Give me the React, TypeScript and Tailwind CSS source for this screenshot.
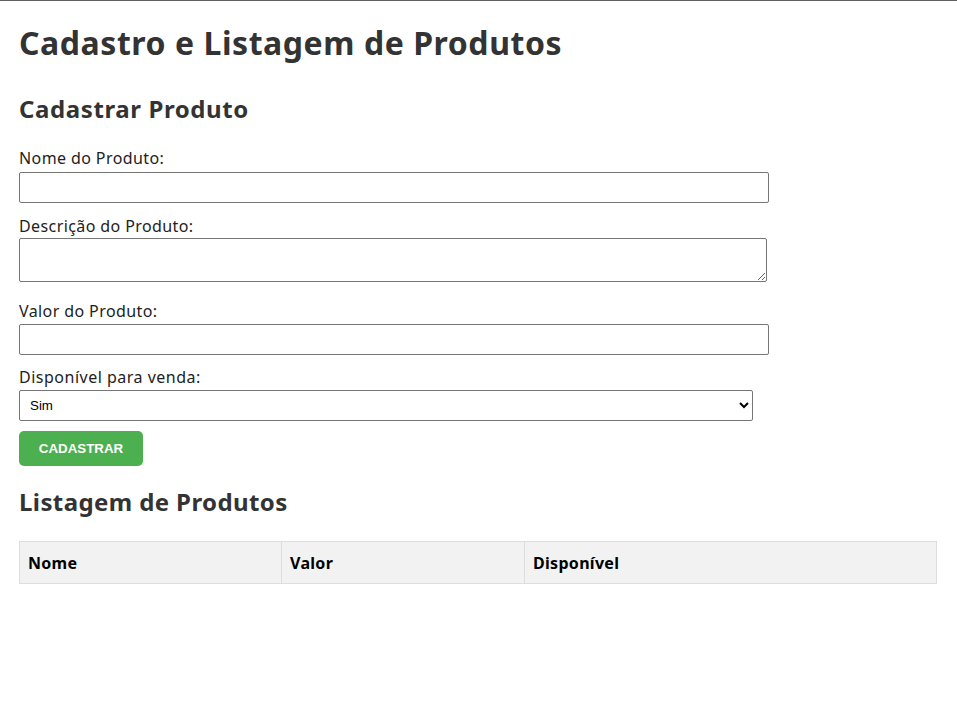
import React, { useState } from 'react';

type Produto = {
  nome: string;
  valor: string;
  disponivel: string;
};

export default function App() {
  const [nome, setNome] = useState('');
  const [descricao, setDescricao] = useState('');
  const [valor, setValor] = useState('');
  const [disponivel, setDisponivel] = useState('sim');
  const [produtos, setProdutos] = useState<Produto[]>([]);

  const cadastrar = (e: React.FormEvent) => {
    e.preventDefault();
    setProdutos([...produtos, { nome, valor, disponivel: disponivel === 'sim' ? 'Sim' : 'Não' }]);
    setNome('');
    setDescricao('');
    setValor('');
  };

  return (
    <div className="min-h-[702px] bg-white border-t border-[#5f5f5f] px-[19px] pt-[23px] font-['Noto_Sans',sans-serif]">
      <h1 className="text-[32px] leading-[38px] font-bold tracking-[0.55px] text-[#333]">Cadastro e Listagem de Produtos</h1>

      <h2 className="mt-[32px] text-[24px] leading-[30px] font-bold tracking-[0.6px] text-[#333]">Cadastrar Produto</h2>

      <form onSubmit={cadastrar}>
        <label className="block mt-[24px] text-[16px] leading-[20px] tracking-[0.4px] text-[#222]">Nome do Produto:</label>
        <input
          value={nome}
          onChange={(e) => setNome(e.target.value)}
          className="block mt-[4px] w-[750px] h-[31px] border border-[#767676] rounded-[2px] px-[7px]"
        />

        <label className="block mt-[13px] text-[16px] leading-[20px] tracking-[0.4px] text-[#222]">Descrição do Produto:</label>
        <textarea
          value={descricao}
          onChange={(e) => setDescricao(e.target.value)}
          className="block mt-[2px] w-[748px] h-[44px] border border-[#767676] rounded-[2px] px-[7px]"
        />

        <label className="block mt-[19px] text-[16px] leading-[20px] tracking-[0.4px] text-[#222]">Valor do Produto:</label>
        <input
          value={valor}
          onChange={(e) => setValor(e.target.value)}
          className="block mt-[3px] w-[750px] h-[31px] border border-[#767676] rounded-[2px] px-[7px]"
        />

        <label className="block mt-[12px] text-[16px] leading-[20px] tracking-[0.5px] text-[#222]">Disponível para venda:</label>
        <select
          value={disponivel}
          onChange={(e) => setDisponivel(e.target.value)}
          className="block mt-[3px] w-[734px] h-[31px] border border-[#767676] rounded-[2px] pl-[6px] text-[13.33px] font-['Liberation_Sans',Arial,sans-serif] text-black"
        >
          <option value="sim">Sim</option>
          <option value="nao">Não</option>
        </select>

        <button
          type="submit"
          className="block mt-[10px] w-[124px] h-[35px] rounded-[5px] bg-[#4caf50] text-white font-bold text-[13.33px] font-['Liberation_Sans',Arial,sans-serif]"
        >
          CADASTRAR
        </button>
      </form>

      <h2 className="mt-[21px] text-[24px] leading-[30px] font-bold tracking-[0.4px] text-[#333]">Listagem de Produtos</h2>

      <table className="mt-[24px] w-[918px] border-collapse">
        <thead>
          <tr className="bg-[#f2f2f2]">
            <th className="w-[262px] h-[42px] border border-[#ddd] px-[8px] text-left text-[16px] font-bold tracking-[0.3px] text-black">Nome</th>
            <th className="w-[243px] h-[42px] border border-[#ddd] px-[8px] text-left text-[16px] font-bold tracking-[0.3px] text-black">Valor</th>
            <th className="h-[42px] border border-[#ddd] px-[8px] text-left text-[16px] font-bold tracking-[0.3px] text-black">Disponível</th>
          </tr>
        </thead>
        <tbody>
          {produtos.map((p, i) => (
            <tr key={i}>
              <td className="border border-[#ddd] px-[8px] py-[8px]">{p.nome}</td>
              <td className="border border-[#ddd] px-[8px] py-[8px]">{p.valor}</td>
              <td className="border border-[#ddd] px-[8px] py-[8px]">{p.disponivel}</td>
            </tr>
          ))}
        </tbody>
      </table>
    </div>
  );
}
